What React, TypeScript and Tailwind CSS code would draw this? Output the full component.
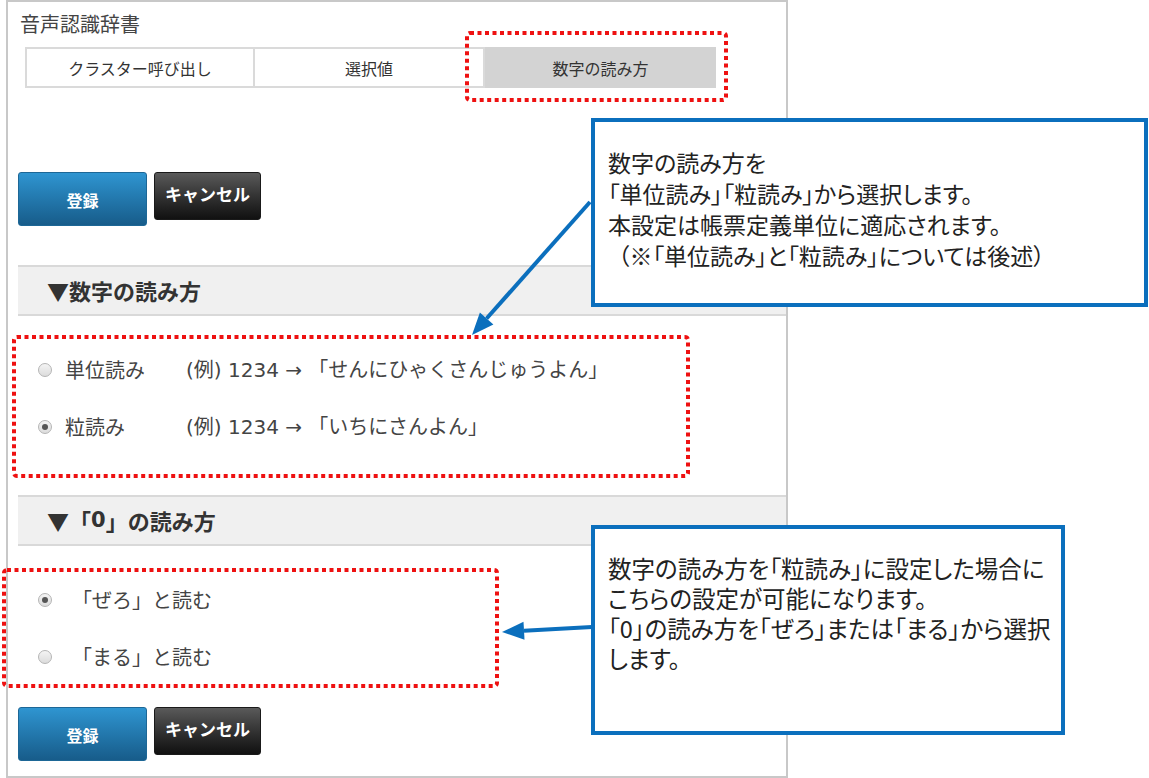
import React from "react";

function Radio({ checked }: { checked?: boolean }) {
  return (
    <span className="flex h-[14px] w-[14px] items-center justify-center rounded-full border border-[#b5b5b5] bg-gradient-to-b from-[#f4f4f4] to-[#dcdcdc]">
      {checked && <span className="h-[6px] w-[6px] rounded-full bg-[#555]" />}
    </span>
  );
}

function Buttons() {
  return (
    <div className="ml-[10px] flex items-start gap-[7px]">
      <button className="flex h-[54px] w-[129px] items-center justify-center rounded-[3px] border border-[#1d6796] bg-gradient-to-b from-[#2f95d1] to-[#175c8a] pt-[2px] text-[16px] font-bold text-white">
        登録
      </button>
      <button className="flex h-[48px] w-[107px] items-center justify-center rounded-[3px] border border-[#1a1a1a] bg-gradient-to-b from-[#5a5a5a] to-[#111111] pb-[4px] text-[17px] font-bold text-white">
        キャンセル
      </button>
    </div>
  );
}

function SectionHeader({ children }: { children: React.ReactNode }) {
  return (
    <div className="ml-[10px] flex h-[51px] items-center border-y-2 border-[#d9d9d9] bg-[#f0f0f0] pl-[29px] text-[22px] font-bold text-[#333]">
      {children}
    </div>
  );
}

function Row({ checked, label, example }: { checked?: boolean; label: string; example?: string }) {
  return (
    <div className="flex h-[57px] items-center pl-[30px] text-[20px] text-[#444]">
      <Radio checked={checked} />
      <span className={example ? "ml-[13px] w-[121px]" : "ml-[20px]"}>{label}</span>
      {example && <span className="font-['DejaVu_Sans','Noto_Sans_CJK_JP',sans-serif] text-[20px]">{example}</span>}
    </div>
  );
}

export default function App() {
  return (
    <div className="relative h-[778px] w-[1149px] overflow-hidden bg-white font-['Noto_Sans_CJK_JP','Noto_Sans',sans-serif]">
      <div className="ml-[6px] flex h-[778px] w-[782px] flex-col border-2 border-[#c8c8c8]">
        <div className="pl-[12px] pt-[10px] text-[20px] leading-[24px] text-[#444]">音声認識辞書</div>
        <div className="ml-[17px] mt-[11px] flex h-[41px] text-[16px] text-[#333]">
          <div className="flex w-[230px] items-center justify-center border-2 border-[#dadada]">クラスター呼び出し</div>
          <div className="flex w-[230px] items-center justify-center border-2 border-l-0 border-[#dadada]">選択値</div>
          <div className="flex w-[231px] items-center justify-center border-2 border-[#d3d3d3] bg-[#d3d3d3]">数字の読み方</div>
        </div>
        <div className="mt-[84px]">
          <Buttons />
        </div>
        <div className="mt-[39px]">
          <SectionHeader>▼数字の読み方</SectionHeader>
        </div>
        <div className="pt-[25px]">
          <Row label="単位読み" example="(例) 1234 → 「せんにひゃくさんじゅうよん」" />
          <Row checked label="粒読み" example="(例) 1234 → 「いちにさんよん」" />
        </div>
        <div className="mt-[40px]">
          <SectionHeader>
            <span>▼「</span>
            <span className="font-['DejaVu_Sans',sans-serif] text-[21px]">0</span>
            <span>」の読み方</span>
          </SectionHeader>
        </div>
        <div className="pt-[25px]">
          <Row checked label="「ぜろ」と読む" />
          <Row label="「まる」と読む" />
        </div>
        <div className="mt-[22px]">
          <Buttons />
        </div>
      </div>

      {/* Callout 1 */}
      <div className="absolute left-[591px] top-[118px] h-[189px] w-[557px] whitespace-nowrap border-4 border-[#0b6fbd] bg-white pl-[13px] pt-[25px] text-[23px] leading-[31px] text-[#222] [font-feature-settings:'palt']">
        <div>数字の読み方を</div>
        <div>「単位読み」「粒読み」から選択します。</div>
        <div>本設定は帳票定義単位に適応されます。</div>
        <div className="pl-[10px]">（※「単位読み」と「粒読み」については後述）</div>
      </div>

      {/* Callout 2 */}
      <div className="absolute left-[591px] top-[525px] h-[210px] w-[474px] whitespace-nowrap border-4 border-[#0b6fbd] bg-white pl-[13px] pt-[24px] text-[23.5px] leading-[30px] text-[#222] [font-feature-settings:'palt']">
        <div>数字の読み方を「粒読み」に設定した場合に</div>
        <div>こちらの設定が可能になります。</div>
        <div>「0」の読み方を「ぜろ」または「まる」から選択</div>
        <div>します。</div>
      </div>

      {/* Annotations */}
      <svg className="pointer-events-none absolute left-0 top-0" width="1149" height="778" viewBox="0 0 1149 778">
        <g fill="none" stroke="#ee1111" strokeWidth="4" strokeDasharray="4 3.5">
          <rect x="467" y="33" width="259" height="67" rx="3" />
          <rect x="14" y="337" width="674" height="139" rx="3" />
          <rect x="4" y="570" width="493" height="116" rx="3" />
        </g>
        <g stroke="#0b6fbd" strokeWidth="4" fill="#0b6fbd">
          <line x1="590" y1="202" x2="486.6" y2="318.5" />
          <polygon points="472,335 493.4,324.5 479.9,312.5" stroke="none" />
          <line x1="592" y1="627" x2="524" y2="630.8" />
          <polygon points="502,632 524.5,639.8 523.5,621.8" stroke="none" />
        </g>
      </svg>
    </div>
  );
}
